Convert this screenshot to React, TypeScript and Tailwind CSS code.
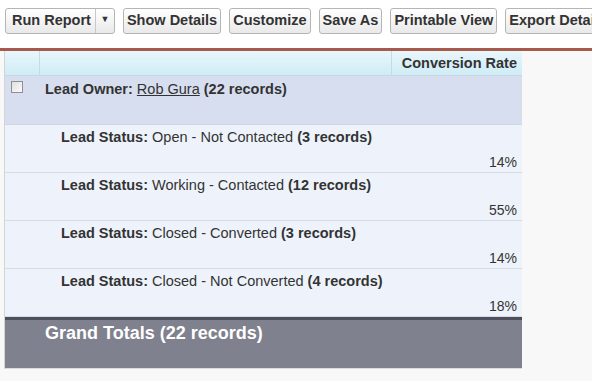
const font = { fontFamily: '"Liberation Sans", Arial, sans-serif' };

const Btn = ({ label }: { label: string }) => (
  <button className="h-[26px] rounded-[3px] border border-[#b5b5b5] bg-gradient-to-b from-[#ffffff] to-[#e9e9e9] px-[3px] text-[14.5px] font-bold text-[#333]">
    {label}
  </button>
);

const statuses = [
  { label: 'Open - Not Contacted', count: 3, rate: '14%' },
  { label: 'Working - Contacted', count: 12, rate: '55%' },
  { label: 'Closed - Converted', count: 3, rate: '14%' },
  { label: 'Closed - Not Converted', count: 4, rate: '18%' },
];

export default function App() {
  return (
    <div className="h-[381px] w-[592px] overflow-hidden bg-white text-[#333]" style={font}>
      <div className="flex h-[48px] gap-[8px] overflow-hidden whitespace-nowrap pl-[5px] pt-[8px]">
        <div className="flex h-[26px] shrink-0 rounded-[3px] border border-[#b5b5b5] bg-gradient-to-b from-[#ffffff] to-[#e9e9e9] text-[14.5px] font-bold">
          <span className="flex items-center border-r border-[#c8c8c8] pl-[6px] pr-[4px]">Run Report</span>
          <span className="flex w-[18px] items-center justify-center pb-[3px] text-[9px]">▼</span>
        </div>
        <Btn label="Show Details" />
        <Btn label="Customize" />
        <Btn label="Save As" />
        <Btn label="Printable View" />
        <Btn label="Export Details" />
      </div>

      <div className="h-[333px] border-t-[3px] border-[#a65a4b] bg-[#f8f8f8] pl-[4px]">
        <div className="w-[518px] border-l border-[#d4d4d4]">
          <div className="flex h-[25px] border-b border-[#c9d7df] bg-gradient-to-b from-[#e8f6fb] to-[#cfecf6] text-[14.5px] font-bold">
            <div className="w-[35px] border-r border-[#c7dbe3]" />
            <div className="w-[352px] border-r border-[#c7dbe3]" />
            <div className="flex flex-1 items-center justify-end pr-[5px] pt-[1px]">Conversion Rate</div>
          </div>

          <div className="flex h-[49px] border-b border-[#d0d7e2] bg-[#d6deef] text-[14.5px]">
            <div className="w-[35px] pl-[6px] pt-[5px]">
              <div className="h-[12px] w-[12px] border border-[#8f8f8f] bg-gradient-to-br from-[#e0e0e0] to-[#fbfbfb]" />
            </div>
            <div className="pl-[5px] pt-[3px] font-bold">
              Lead Owner: <span className="font-normal underline">Rob Gura</span> (22 records)
            </div>
          </div>

          {statuses.map((s) => (
            <div key={s.label} className="flex h-[48px] flex-col border-b border-[#d6dbe2] bg-[#eef3fb] text-[14.5px]">
              <div className="h-[24px] pl-[56px] pt-[2px]">
                <span className="font-bold">Lead Status:</span> {s.label} <span className="font-bold">({s.count} records)</span>
              </div>
              <div className="pr-[5px] pt-[3px] text-right text-[14px]">{s.rate}</div>
            </div>
          ))}

          <div className="h-[52px] border-t-[3px] border-b border-t-[#4e4f5d] border-b-[#dcdcdc] bg-[#80818e] pl-[40px] text-[18px] font-bold text-white">
            Grand Totals (22 records)
          </div>
        </div>
      </div>
    </div>
  );
}
